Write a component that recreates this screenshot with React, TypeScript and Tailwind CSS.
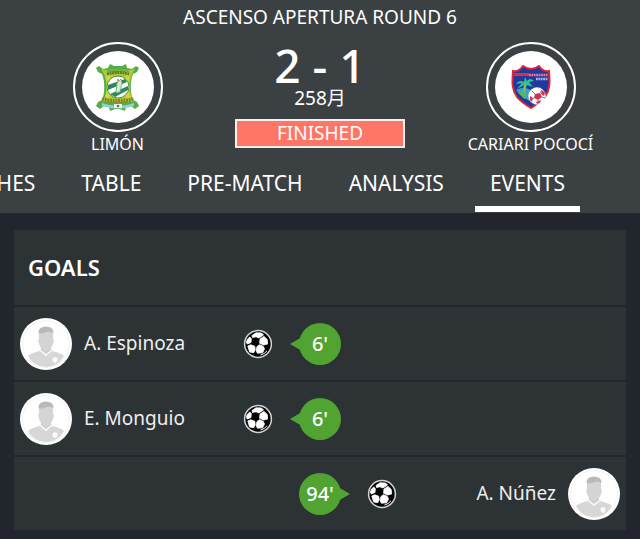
import React from "react";

type Side = "home" | "away";

interface Goal {
  id: number;
  player: string;
  minute: string;
  side: Side;
}

const goals: Goal[] = [
  { id: 1, player: "A. Espinoza", minute: "6'", side: "home" },
  { id: 2, player: "E. Monguio", minute: "6'", side: "home" },
  { id: 3, player: "A. Núñez", minute: "94'", side: "away" },
];

const tabs = ["MATCHES", "TABLE", "PRE-MATCH", "ANALYSIS", "EVENTS"];

function LimonCrest() {
  return (
    <svg viewBox="0 0 44 50" className="h-[50px] w-11" aria-hidden="true">
      <path
        d="M14 2l4 2h8l4-2 1 4 5 1 4-3 3 2-2 4-4 2c-3 7-3 19 0 26l4 2 2 4-4 3-4-3-5 1-1 4-5-2h-5l-5 2-1-4-5-1-4 3-4-3 2-4 4-2c3-7 3-19 0-26l-4-2-2-4 3-2 4 3 5-1z"
        fill="#55ad43"
      />
      <path
        d="M9 8h26l4-1-3 5c-3 8-3 17 0 25l2 3H6l2-3c3-8 3-17 0-25L5 7z"
        fill="#a9cf35"
      />
      <path d="M10 14c3 6 2 16-1 22l5 1V13zM34 14c-3 6-2 16 1 22l-5 1V13z" fill="#d0d83c" />
      <path d="M11 7h22v3H11z" fill="#65b843" />
      <path d="M11 12q11-3 22 0" stroke="#6e7428" strokeWidth="3" strokeDasharray="2 .6" fill="none" />
      <circle cx="22" cy="25" r="11" fill="#fff" stroke="#4c8d4d" strokeWidth="1" />
      <path d="M12 23l17-6 2 3-19 8zM14 32l18-8v4l-13 7z" fill="#2d8952" />
      <path d="M20 31l1-10 4-4 1 4-2 9z" fill="#d5e9cf" stroke="#5ea77c" strokeWidth=".8" />
      <circle cx="22" cy="18" r="1.2" fill="#e39470" />
      <path d="M6 37q16 4 32 0" stroke="#8b8525" strokeWidth="4" strokeDasharray="2 .7" fill="none" />
      <path d="M6 41q16 6 32 0v3q-16 5-32 0z" fill="#91cde0" />
      <path d="M18 42h8v4h-8z" fill="#eef6f3" />
      <circle cx="22" cy="44" r="1.3" fill="#477779" />
    </svg>
  );
}

function CariariCrest() {
  return (
    <svg viewBox="0 0 40 44" className="h-11 w-10" aria-hidden="true">
      <path
        d="M2 6q6 1 10-5 8 6 16 0 4 6 10 5c1 12 1 19-4 26-4 5-9 8-14 11-5-3-10-6-14-11C1 25 1 18 2 6z"
        fill="#22389e"
        stroke="#db2636"
        strokeWidth="2"
      />
      <path d="M3 8h15v3H3z" fill="#dc3044" />
      <path d="M18 10h19" stroke="#ef7790" strokeWidth="2.6" strokeDasharray="1.8 .6" />
      <path d="M25 14h12" stroke="#a9b6e4" strokeWidth="2.4" strokeDasharray="1.8 .6" />
      <path d="M5 25q7-4 15 0l-1 11q-9-4-14-11z" fill="#3a9fd4" />
      <path d="M13 17q-5-3-8 2l6-1-5 6 7-4 1 5 2-5 6 2-4-5 5-1q-4-4-7 0l-2-4z" fill="#2fc391" />
      <path d="M13 19l2 1-1 14-3-2z" fill="#95b64b" />
      <path d="M7 28l5-3 4 4-2 5z" fill="#56b26b" />
      <circle cx="26" cy="31" r="8.5" fill="#fff" stroke="#dfd8e9" strokeWidth=".5" />
      <path d="M24 29l5-1 2 4-4 3-4-2zM31 25l3 3-1 3-3-2zM19 31l3 2-1 4-2-2zM25 37l5-2-1 3-3 1z" fill="#d42f4e" />
      <path d="M24 29l-3-3m8 2l2-3m0 7l3 1m-7 2v3m-4-5l-2 1" stroke="#6474b6" />
    </svg>
  );
}

function Football() {
  return (
    <svg viewBox="0 0 30 30" className="size-[30px] shrink-0" role="img" aria-label="Goal">
      <circle cx="15" cy="15" r="13.4" fill="#050505" stroke="#d4d4d4" strokeWidth="1.5" />
      <g fill="#fff" stroke="#fff" strokeWidth=".8" strokeLinejoin="round">
        <path d="M9 6.500L13 3.800l5.500.2 2 2-4.500 3-3-1.200-3.500.7z" />
        <path d="M4.300 10.500l2.400-2.500 1.600 1.500-.3 4-3.800 1.500-.8-2z" />
        <path d="M17 10l4-2.600 3.200 3 .4 4.600-4 1-4-1.800z" />
        <path d="M4.800 17l3-1.200 4 1.500.4 3.200-1.400 3.200-4.200-.7z" />
        <path d="M14 17.500l2.500-1.800 3.700 1.600 1.300 2.700-1.900 3.800-5.200.4-1.300-2.700z" />
      </g>
      <path d="M17.500 26q4.200-1 6.500-4.200" fill="none" stroke="#fff" strokeWidth="1" />
    </svg>
  );
}

function Avatar() {
  return (
    <svg viewBox="0 0 52 52" className="size-[52px] shrink-0" aria-hidden="true">
      <circle cx="26" cy="26" r="26" fill="#fff" />
      <circle cx="26" cy="26" r="23.5" fill="#fefefe" stroke="#eee" strokeWidth=".7" />
      <path d="M8 38q3-3 12-5l6 5 6-5q9 2 12 5-6 11-18 11T8 38z" fill="#d7d7d7" />
      <path d="M19 32l7 6 7-6-1-1H20z" fill="#f6f6f6" />
      <path d="M21 26h10v6l-5 4-5-4z" fill="#cecece" />
      <path d="M19 13q7-5 14 0v8l1 1-1 4q-2 6-7 7-5-1-7-7l-1-4 1-1z" fill="#d4d4d4" />
      <path d="M18.600 15v-2q1-4 7.400-4.400 6.400.4 7.400 4.400v2q-4-2-8-.5-4 1.500-6.800.5z" fill="#b9b9b9" />
      <path d="M32.500 40l2.500-1 2.500 1q.5 4-2.500 5-3-1-2.500-5z" fill="#fafafa" />
    </svg>
  );
}

function Team({ name, children }: { name: string; children: React.ReactNode }) {
  return (
    <div className="flex flex-col items-center">
      <div className="flex size-[90px] items-center justify-center rounded-full border-2 border-white">
        <div className="flex size-[72px] items-center justify-center rounded-full bg-white">{children}</div>
      </div>
      <h2 className="text-base leading-6 whitespace-nowrap">{name}</h2>
    </div>
  );
}

function MinuteBadge({ minute, side }: { minute: string; side: Side }) {
  return (
    <div className="relative flex size-[42px] items-center justify-center rounded-full bg-[#51a332]">
      <svg
        viewBox="0 0 12 14"
        className={
          side === "home"
            ? "absolute top-[14px] -left-[9px] h-[14px] w-3"
            : "absolute top-[14px] -right-[9px] h-[14px] w-3 rotate-180"
        }
        aria-hidden="true"
      >
        <path d="M0 7L12 0v14z" fill="#51a332" />
      </svg>
      <span className="relative text-xl font-medium">{minute}</span>
    </div>
  );
}

function GoalRow({ goal }: { goal: Goal }) {
  const home = goal.side === "home";
  const details = (
    <div className={home ? "flex items-center pr-[26px] pl-[6px]" : "flex flex-row-reverse items-center pr-[6px] pl-[26px]"}>
      <Avatar />
      <span className="mx-3 text-[19px] text-[#eeeeee]">{goal.player}</span>
      <div className={home ? "ml-auto" : "mr-auto"}>
        <Football />
      </div>
    </div>
  );
  return (
    <li className="grid h-[75px] grid-cols-[1fr_auto_1fr] items-center border-t-2 border-[#23272b]">
      {home ? details : <div />}
      <MinuteBadge minute={goal.minute} side={goal.side} />
      {home ? <div /> : details}
    </li>
  );
}

export default function App() {
  return (
    <div className="min-h-screen bg-[#22252e] font-['Noto_Sans','Noto_Sans_CJK_JP',sans-serif] text-white">
      <header className="bg-[#3b4043]">
        <h1 className="pt-[3px] text-center text-[19px] leading-7">ASCENSO APERTURA ROUND 6</h1>
        <div className="grid grid-cols-[1fr_170px_1fr] pt-[11px]">
          <Team name="LIMÓN">
            <LimonCrest />
          </Team>
          <div className="flex flex-col items-center">
            <div className="text-[46px] leading-[46px] font-medium">2 - 1</div>
            <div className="text-[19px] leading-5">258月</div>
            <div className="mt-[11px] w-full border-2 border-[#f4eeee] bg-[#ff7566] text-center text-[19px] leading-[25px]">
              FINISHED
            </div>
          </div>
          <div className="pl-4">
            <Team name="CARIARI POCOCÍ">
              <CariariCrest />
            </Team>
          </div>
        </div>
        <nav className="flex h-[57px] justify-end gap-4 overflow-hidden pr-[60px]" aria-label="Match sections">
          {tabs.map((tab) => (
            <button
              key={tab}
              type="button"
              aria-current={tab === "EVENTS" ? "page" : undefined}
              className={
                tab === "EVENTS"
                  ? "mb-[1px] shrink-0 border-b-[6px] border-white px-[15px] pt-[6px] text-[21px]"
                  : "mb-[1px] shrink-0 border-b-[6px] border-transparent px-[15px] pt-[6px] text-[21px]"
              }
            >
              {tab}
            </button>
          ))}
        </nav>
      </header>
      <main className="px-[14px] pt-[17px] pb-2">
        <section className="bg-[#2d3235]" aria-labelledby="goals-title">
          <h2 id="goals-title" className="px-[14px] text-[22px] leading-[75px] font-semibold">
            GOALS
          </h2>
          <ul>
            {goals.map((goal) => (
              <GoalRow key={goal.id} goal={goal} />
            ))}
          </ul>
        </section>
      </main>
    </div>
  );
}
